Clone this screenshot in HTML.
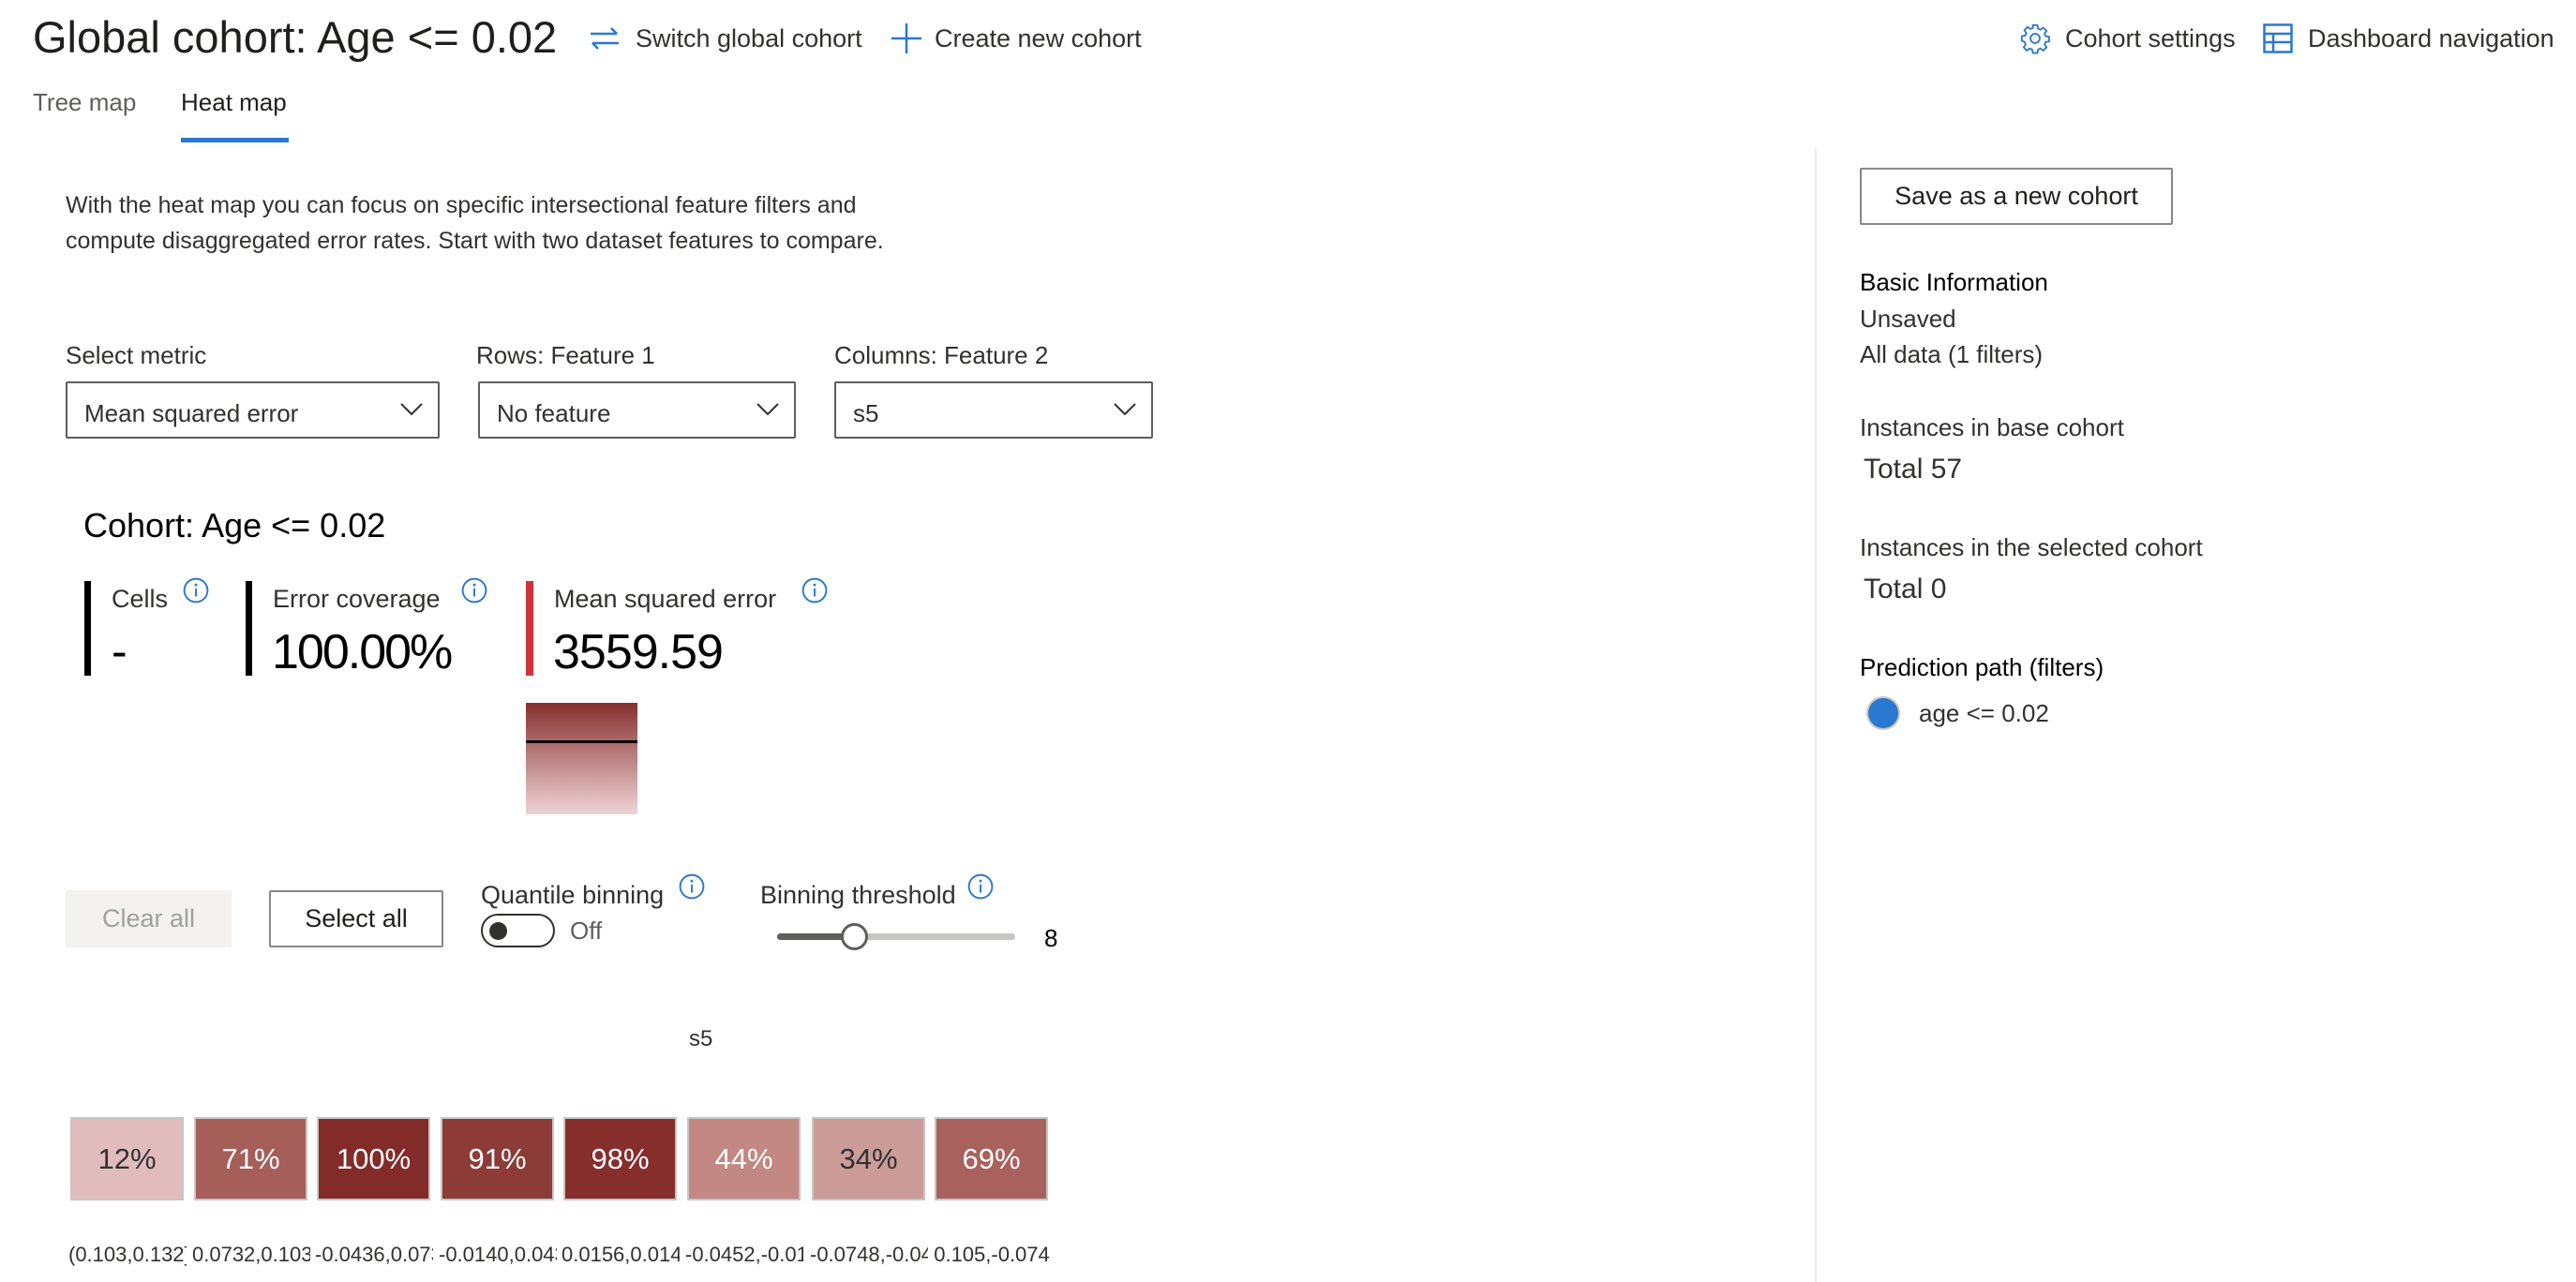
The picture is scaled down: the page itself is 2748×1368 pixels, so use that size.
<!DOCTYPE html>
<html><head><meta charset="utf-8"><style>
body{margin:0;width:2748px;height:1368px;background:#fff;font-family:"Liberation Sans",sans-serif;color:#323130;position:relative;overflow:hidden}
.a{position:absolute;white-space:nowrap;line-height:1}
.dd{position:absolute;border:2px solid #605e5c;border-radius:2px;box-sizing:border-box;height:61px}
.dd span{position:absolute;left:18px;top:17px;font-size:26px;color:#323130}
.dd svg{position:absolute;right:16px;top:20px}
.cell{position:absolute;top:1192px;width:121px;height:89px;border:2px solid #c8c6c4;box-sizing:border-box;font-size:31px;text-align:center;line-height:85px;color:#fff}
.lab{position:absolute;top:1326px;font-size:22px;width:126px;overflow:hidden;white-space:nowrap;text-align:center;color:#323130}
.info{position:absolute;width:28px;height:28px}
</style></head><body>
<div class="a" style="left:35px;top:16px;font-size:47px;color:#201f1e">Global cohort: Age &lt;= 0.02</div>
<svg class="a" style="left:628px;top:26px" width="34" height="30" viewBox="0 0 34 30"><path d="M2 10H30M24 4l6 6M32 20H4M10 26l-6-6" stroke="#2b78d0" stroke-width="2.5" fill="none"/></svg>
<div class="a" style="left:678px;top:28px;font-size:27px;color:#323130">Switch global cohort</div>
<svg class="a" style="left:950px;top:24px" width="34" height="34"><path d="M17 1V33M1 17H33" stroke="#2b78d0" stroke-width="2.5"/></svg>
<div class="a" style="left:997px;top:28px;font-size:27px">Create new cohort</div>
<svg class="a" style="left:2154px;top:24px" width="34" height="34" viewBox="0 0 24 24"><path d="M12 8.5a3.5 3.5 0 1 0 0 7 3.5 3.5 0 0 0 0-7zM10.3 2h3.4l.5 2.6 1.8.8 2.2-1.5 2.4 2.4-1.5 2.2.8 1.8 2.6.5v3.4l-2.6.5-.8 1.8 1.5 2.2-2.4 2.4-2.2-1.5-1.8.8-.5 2.6h-3.4l-.5-2.6-1.8-.8-2.2 1.5-2.4-2.4 1.5-2.2-.8-1.8L2 13.7v-3.4l2.6-.5.8-1.8-1.5-2.2 2.4-2.4 2.2 1.5 1.8-.8z" stroke="#2b78d0" stroke-width="1.3" fill="none"/></svg>
<div class="a" style="left:2203px;top:28px;font-size:27px">Cohort settings</div>
<svg class="a" style="left:2414px;top:25px" width="32" height="32"><rect x="1.5" y="1.5" width="29" height="29" fill="none" stroke="#2b78d0" stroke-width="2.5"/><path d="M1.5 11H30.5M1.5 20H30.5M11 11V30.5" stroke="#2b78d0" stroke-width="2.5"/></svg>
<div class="a" style="left:2462px;top:28px;font-size:27px">Dashboard navigation</div>

<div class="a" style="left:35px;top:96px;font-size:26px;color:#605e5c">Tree map</div>
<div class="a" style="left:193px;top:96px;font-size:26px;color:#201f1e">Heat map</div>
<div class="a" style="left:193px;top:147px;width:115px;height:5px;background:#2b78d0"></div>

<div class="a" style="left:70px;top:200px;font-size:25px;line-height:38px;white-space:normal;width:1000px">With the heat map you can focus on specific intersectional feature filters and<br>compute disaggregated error rates. Start with two dataset features to compare.</div>

<div class="a" style="left:70px;top:366px;font-size:26px">Select metric</div>
<div class="a" style="left:508px;top:366px;font-size:26px">Rows: Feature 1</div>
<div class="a" style="left:890px;top:366px;font-size:26px">Columns: Feature 2</div>
<div class="dd" style="left:70px;top:407px;width:399px"><span>Mean squared error</span><svg width="24" height="16"><path d="M1 2l11 11L23 2" stroke="#323130" stroke-width="2" fill="none"/></svg></div>
<div class="dd" style="left:510px;top:407px;width:339px"><span>No feature</span><svg width="24" height="16"><path d="M1 2l11 11L23 2" stroke="#323130" stroke-width="2" fill="none"/></svg></div>
<div class="dd" style="left:890px;top:407px;width:340px"><span>s5</span><svg width="24" height="16"><path d="M1 2l11 11L23 2" stroke="#323130" stroke-width="2" fill="none"/></svg></div>

<div class="a" style="left:89px;top:543px;font-size:36px;color:#000">Cohort: Age &lt;= 0.02</div>

<div class="a" style="left:90px;top:620px;width:7px;height:101px;background:#000"></div>
<div class="a" style="left:119px;top:626px;font-size:27px">Cells</div>
<div class="a" style="left:119px;top:670px;font-size:50px;color:#000">-</div>
<div class="a" style="left:262px;top:620px;width:7px;height:101px;background:#000"></div>
<div class="a" style="left:291px;top:626px;font-size:27px">Error coverage</div>
<div class="a" style="left:290px;top:670px;font-size:52px;color:#000;letter-spacing:-2px">100.00%</div>
<div class="a" style="left:561px;top:620px;width:8px;height:101px;background:#d13438"></div>
<div class="a" style="left:591px;top:626px;font-size:27px">Mean squared error</div>
<div class="a" style="left:590px;top:670px;font-size:52px;color:#000;letter-spacing:-1px">3559.59</div>
<svg class="info" style="left:195px;top:616px" viewBox="0 0 26 26"><circle cx="13" cy="13" r="11.5" fill="none" stroke="#2b78d0" stroke-width="1.8"/><path d="M13 11v8" stroke="#2b78d0" stroke-width="1.8"/><circle cx="13" cy="7.5" r="1.3" fill="#2b78d0"/></svg>
<svg class="info" style="left:492px;top:616px" viewBox="0 0 26 26"><circle cx="13" cy="13" r="11.5" fill="none" stroke="#2b78d0" stroke-width="1.8"/><path d="M13 11v8" stroke="#2b78d0" stroke-width="1.8"/><circle cx="13" cy="7.5" r="1.3" fill="#2b78d0"/></svg>
<svg class="info" style="left:855px;top:616px" viewBox="0 0 26 26"><circle cx="13" cy="13" r="11.5" fill="none" stroke="#2b78d0" stroke-width="1.8"/><path d="M13 11v8" stroke="#2b78d0" stroke-width="1.8"/><circle cx="13" cy="7.5" r="1.3" fill="#2b78d0"/></svg>

<div class="a" style="left:561px;top:750px;width:119px;height:119px;background:linear-gradient(#86302e,#f0d4d6)"></div>
<div class="a" style="left:561px;top:790px;width:119px;height:3px;background:#000"></div>

<div class="a" style="left:70px;top:950px;width:177px;height:61px;background:#f3f2f1;border-radius:2px;font-size:27px;color:#a19f9d;text-align:center;line-height:61px">Clear all</div>
<div class="a" style="left:287px;top:950px;width:186px;height:61px;border:2px solid #8a8886;box-sizing:border-box;border-radius:2px;font-size:27px;color:#201f1e;text-align:center;line-height:57px">Select all</div>
<div class="a" style="left:513px;top:942px;font-size:27px">Quantile binning</div>
<svg class="info" style="left:724px;top:932px" viewBox="0 0 26 26"><circle cx="13" cy="13" r="11.5" fill="none" stroke="#2b78d0" stroke-width="1.8"/><path d="M13 11v8" stroke="#2b78d0" stroke-width="1.8"/><circle cx="13" cy="7.5" r="1.3" fill="#2b78d0"/></svg>
<div class="a" style="left:513px;top:975px;width:79px;height:36px;border:2px solid #323130;border-radius:20px;box-sizing:border-box"></div>
<div class="a" style="left:522px;top:984px;width:19px;height:19px;border-radius:50%;background:#323130"></div>
<div class="a" style="left:608px;top:980px;font-size:26px;color:#605e5c">Off</div>
<div class="a" style="left:811px;top:942px;font-size:27px">Binning threshold</div>
<svg class="info" style="left:1032px;top:932px" viewBox="0 0 26 26"><circle cx="13" cy="13" r="11.5" fill="none" stroke="#2b78d0" stroke-width="1.8"/><path d="M13 11v8" stroke="#2b78d0" stroke-width="1.8"/><circle cx="13" cy="7.5" r="1.3" fill="#2b78d0"/></svg>
<div class="a" style="left:829px;top:996px;width:254px;height:7px;background:#c8c6c4;border-radius:4px"></div>
<div class="a" style="left:829px;top:996px;width:82px;height:7px;background:#605e5c;border-radius:4px"></div>
<div class="a" style="left:897px;top:985px;width:29px;height:29px;border-radius:50%;background:#fff;border:3px solid #605e5c;box-sizing:border-box"></div>
<div class="a" style="left:1114px;top:988px;font-size:26px;color:#000">8</div>

<div class="a" style="left:735px;top:1097px;font-size:24px">s5</div>

<div class="cell" style="left:75px;background:#e0bcbc;color:#323130">12%</div>
<div class="cell" style="left:207px;background:#a65e59">71%</div>
<div class="cell" style="left:338px;background:#822b29">100%</div>
<div class="cell" style="left:470px;background:#8c3b37">91%</div>
<div class="cell" style="left:601px;background:#852e2c">98%</div>
<div class="cell" style="left:733px;background:#c38784">44%</div>
<div class="cell" style="left:866px;background:#cc9c98;color:#323130">34%</div>
<div class="cell" style="left:997px;background:#a8615c">69%</div>
<div class="lab" style="left:73px">(0.103,0.132]</div>
<div class="lab" style="left:205px">0.0732,0.103</div>
<div class="lab" style="left:336px">-0.0436,0.073:</div>
<div class="lab" style="left:468px">-0.0140,0.043(</div>
<div class="lab" style="left:599px">0.0156,0.014</div>
<div class="lab" style="left:731px">-0.0452,-0.015</div>
<div class="lab" style="left:864px">-0.0748,-0.045</div>
<div class="lab" style="left:995px">0.105,-0.074</div>

<div class="a" style="left:1936px;top:158px;width:2px;height:1210px;background:#edebe9"></div>
<div class="a" style="left:1984px;top:179px;width:334px;height:61px;border:2px solid #8a8886;box-sizing:border-box;border-radius:2px;font-size:27px;color:#201f1e;text-align:center;line-height:57px">Save as a new cohort</div>
<div class="a" style="left:1984px;top:288px;font-size:26px;color:#000">Basic Information</div>
<div class="a" style="left:1984px;top:327px;font-size:26px">Unsaved</div>
<div class="a" style="left:1984px;top:365px;font-size:26px">All data (1 filters)</div>
<div class="a" style="left:1984px;top:443px;font-size:26px">Instances in base cohort</div>
<div class="a" style="left:1988px;top:486px;font-size:30px">Total 57</div>
<div class="a" style="left:1984px;top:571px;font-size:26px">Instances in the selected cohort</div>
<div class="a" style="left:1988px;top:614px;font-size:30px">Total 0</div>
<div class="a" style="left:1984px;top:699px;font-size:26px;color:#000">Prediction path (filters)</div>
<div class="a" style="left:1993px;top:745px;width:32px;height:32px;border-radius:50%;background:#2b78d0;box-shadow:0 0 0 2px #c8c6c4"></div>
<div class="a" style="left:2047px;top:748px;font-size:26px">age &lt;= 0.02</div>
</body></html>
